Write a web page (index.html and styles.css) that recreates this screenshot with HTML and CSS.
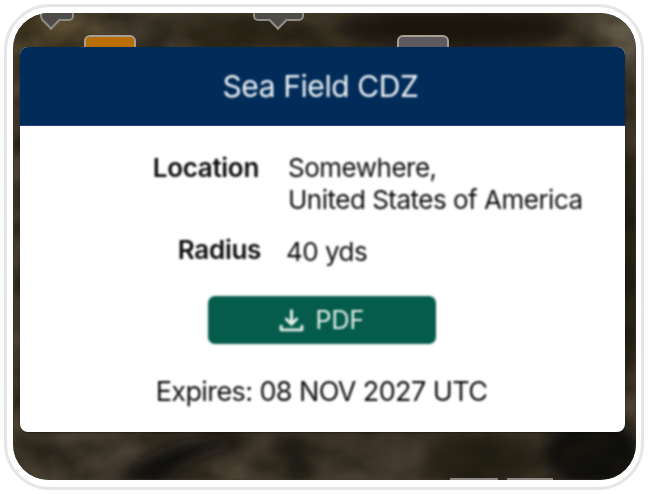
FILE: index.html

```html
<!DOCTYPE html>
<html lang="en">
<head>
  <meta charset="UTF-8" />
  <title>Sea Field CDZ</title>
  <link rel="stylesheet" href="styles.css">
</head>
<body>
  <div class="frame">
    <div class="map">
      <svg class="terrain" viewBox="0 0 623 467" preserveAspectRatio="none">
        <defs>
          <filter id="grain" x="0" y="0" width="100%" height="100%" color-interpolation-filters="sRGB">
            <feTurbulence type="fractalNoise" baseFrequency="0.025 0.035" numOctaves="3" seed="11" />
            <feColorMatrix values="0 0 0 0 0.10  0 0 0 0 0.09  0 0 0 0 0.05  1.2 0 0 0 -0.3" />
            <feGaussianBlur stdDeviation="1.6" />
          </filter>
          <filter id="soft">
            <feGaussianBlur stdDeviation="8" />
          </filter>
        </defs>
        <rect width="623" height="467" fill="#4a4033" />
        <g filter="url(#soft)">
          <ellipse cx="30" cy="25" rx="60" ry="26" fill="#5c4d32" />
          <ellipse cx="606" cy="40" rx="26" ry="50" fill="#625947" />
          <ellipse cx="612" cy="250" rx="20" ry="120" fill="#262217" />
          <ellipse cx="440" cy="15" rx="120" ry="22" fill="#1a170d" />
          <ellipse cx="240" cy="24" rx="70" ry="14" fill="#2d2618" />
          <path d="M100 470 C125 445 150 428 210 422 L235 432 C190 440 165 455 150 475 Z" fill="#11100a" />
          <path d="M275 470 C275 450 265 430 262 420 L290 420 C300 440 300 455 300 470 Z" fill="#1e1b12" />
          <ellipse cx="580" cy="440" rx="50" ry="38" fill="#0f100a" />
          <ellipse cx="470" cy="445" rx="60" ry="26" fill="#282418" />
          <ellipse cx="350" cy="445" rx="50" ry="20" fill="#463e30" />
          <ellipse cx="60" cy="445" rx="50" ry="22" fill="#4a4135" />
        </g>
        <rect width="623" height="467" filter="url(#grain)" />
      </svg>
      <div class="pin pin-a"></div>
      <div class="pin pin-b"></div>
      <div class="tag tag-orange"></div>
      <div class="tag tag-gray"></div>
      <div class="stub stub-a"></div>
      <div class="stub stub-b"></div>

      <div class="card">
        <div class="card-title"><span class="card-title-text">Sea Field CDZ</span></div>
        <div class="card-body">
          <div class="info">
            <div class="info-label">Location</div>
            <div class="info-value">Somewhere,<br>United States of America</div>
            <div class="info-label info-label-radius">Radius</div>
            <div class="info-value info-value-radius">40 yds</div>
          </div>
          <button class="btn">
            <svg class="btn-icon" viewBox="0 0 24 24" fill="none" stroke="currentColor" stroke-width="2.8" stroke-linecap="round" stroke-linejoin="round">
              <path d="M12 2.5v12" />
              <path d="M7 10.5l5 5 5-5" />
              <path d="M2 17.5v3.5h20v-3.5" />
            </svg>
            <span>PDF</span>
          </button>
          <div class="expires">Expires: 08 NOV 2027 UTC</div>
        </div>
      </div>
    </div>
  </div>
</body>
</html>
```

FILE: styles.css

```css
html, body {
  margin: 0;
  padding: 0;
  height: 100%;
  background-color: white;
  font-family: Inter, "Liberation Sans", sans-serif;
  overflow: hidden;
}
.frame {
  box-sizing: border-box;
  width: 640px;
  height: 486px;
  margin: 4px 0 0 4px;
  padding: 6px 5px 6px 6px;
  border: 3px solid #e6e6e6;
  border-radius: 46px;
  background-color: white;
}
.map {
  position: relative;
  height: 467px;
  box-sizing: border-box;
  padding: 34px 11px 0 7px;
  border-radius: 36px;
  overflow: hidden;
  background-color: #3d352a;
}
.terrain {
  position: absolute;
  left: 0;
  top: 0;
  width: 100%;
  height: 100%;
  filter: blur(1px);
}
.card {
  position: relative;
  border-radius: 8px;
  overflow: hidden;
  background-color: white;
  box-shadow: 0 1px 2px rgba(0, 0, 0, 0.4);
}
.card-title {
  height: 78px;
  padding-right: 4px;
  line-height: 78px;
  background-color: #012b58;
  border-bottom: 1px solid #2c3f86;
  color: #eef3f7;
  font-size: 30px;
  letter-spacing: -0.4px;
  text-align: center;
}
.card-title-text {
  display: inline-block;
  filter: blur(0.8px);
}
.card-body > * {
  filter: blur(0.8px);
}
.card-body {
  height: 306px;
  box-sizing: border-box;
  padding-top: 26px;
  display: flex;
  flex-direction: column;
  align-items: center;
  color: #0c0c0c;
}
.info {
  display: grid;
  grid-template-columns: 239px 1fr;
  column-gap: 29px;
  width: 100%;
  font-size: 26px;
  letter-spacing: -0.5px;
  line-height: 32px;
}
.info-label {
  text-align: right;
  font-weight: 600;
  letter-spacing: -0.3px;
}
.info-label-radius {
  margin-top: 18px;
  margin-right: -2px;
}
.info-value-radius {
  margin-top: 20px;
  margin-left: -2px;
}
.btn {
  display: flex;
  align-items: center;
  justify-content: center;
  gap: 12px;
  width: 228px;
  height: 48px;
  margin-top: 28px;
  margin-left: -2px;
  border: none;
  border-radius: 7px;
  background-color: #055c4c;
  color: #e6f0ec;
  font-family: inherit;
  font-size: 25px;
  cursor: pointer;
}
.btn-icon {
  width: 25px;
  height: 25px;
}
.expires {
  margin-top: 31px;
  margin-left: -2px;
  font-size: 27px;
  letter-spacing: -0.6px;
}
.pin {
  position: absolute;
  top: -10px;
  height: 14px;
  box-sizing: content-box;
  border: 2px solid #8f8d8a;
  border-radius: 0 0 5px 5px;
  background-color: #4f4c48;
  filter: blur(0.6px);
}
.pin::after {
  content: "";
  position: absolute;
  top: 8px;
  width: 12px;
  height: 12px;
  border-right: 2px solid #8f8d8a;
  border-bottom: 2px solid #8f8d8a;
  background-color: #4f4c48;
  transform: rotate(45deg);
}
.pin-a {
  left: 27px;
  width: 30px;
}
.pin-a::after {
  left: 2px;
}
.pin-b {
  left: 240px;
  width: 47px;
}
.pin-b::after {
  left: 16px;
}
.tag {
  position: absolute;
  top: 22px;
  height: 30px;
  border-radius: 6px;
  box-sizing: border-box;
  border: 2px solid #a89f93;
  filter: blur(0.6px);
}
.tag-orange {
  left: 71px;
  width: 52px;
  background-color: #b86f08;
}
.tag-gray {
  left: 384px;
  width: 52px;
  background-color: #5c5a5e;
}
.stub {
  position: absolute;
  bottom: 0;
  height: 2px;
  background-color: #8d8a85;
}
.stub-a {
  left: 437px;
  width: 48px;
}
.stub-b {
  left: 494px;
  width: 46px;
}
```
